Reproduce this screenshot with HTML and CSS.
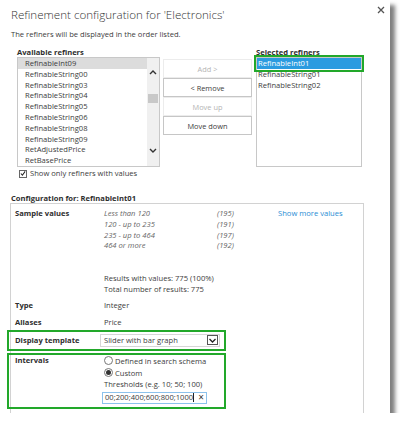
FILE: index.html
```html
<!DOCTYPE html>
<html>
<head>
<meta charset="utf-8">
<link rel="stylesheet" href="styles.css">
</head>
<body>
<div class="dialog">
  <button class="close" aria-label="Close"><svg width="8" height="8" viewBox="0 0 8 8"><path d="M1 1L7 7M7 1L1 7" stroke="#555" stroke-width="1.3" fill="none"/></svg></button>
  <h1 class="title">Refinement configuration for 'Electronics'</h1>
  <p class="intro">The refiners will be displayed in the order listed.</p>

  <div class="refiners">
    <div class="col avail">
      <div class="label">Available refiners</div>
      <div class="listbox">
        <ul class="items">
          <li class="sel-grey">RefinableInt09</li>
          <li>RefinableString00</li>
          <li>RefinableString03</li>
          <li>RefinableString04</li>
          <li>RefinableString05</li>
          <li>RefinableString06</li>
          <li>RefinableString08</li>
          <li>RefinableString09</li>
          <li>RetAdjustedPrice</li>
          <li>RetBasePrice</li>
        </ul>
        <div class="scrollbar">
          <svg class="up" width="8" height="6" viewBox="0 0 8 6"><path d="M1 5L4 2L7 5" stroke="#333" stroke-width="1.4" fill="none"/></svg>
          <div class="thumb"></div>
          <svg class="down" width="8" height="6" viewBox="0 0 8 6"><path d="M1 1L4 4L7 1" stroke="#333" stroke-width="1.4" fill="none"/></svg>
        </div>
      </div>
      <label class="check"><span class="box"><svg width="7" height="7" viewBox="0 0 7 7"><path d="M1 3.5L2.8 5.5L6 1" stroke="#222" stroke-width="1.2" fill="none"/></svg></span>Show only refiners with values</label>
    </div>
    <div class="buttons">
      <button class="btn disabled">Add &gt;</button>
      <button class="btn">&lt; Remove</button>
      <button class="btn disabled">Move up</button>
      <button class="btn">Move down</button>
    </div>
    <div class="col selected">
      <div class="label">Selected refiners</div>
      <div class="listbox">
        <ul class="items">
          <li class="sel-blue">RefinableInt01</li>
          <li>RefinableString01</li>
          <li>RefinableString02</li>
        </ul>
      </div>
    </div>
  </div>

  <div class="config-title">Configuration for: RefinableInt01</div>
  <div class="config">
    <div class="row sample">
      <div class="key">Sample values</div>
      <div class="val">
        <div class="samples">
          <div class="values">
            <div>Less than 120</div>
            <div>120 - up to 235</div>
            <div>235 - up to 464</div>
            <div>464 or more</div>
          </div>
          <div class="counts">
            <div>(195)</div>
            <div>(191)</div>
            <div>(197)</div>
            <div>(192)</div>
          </div>
          <a class="more">Show more values</a>
        </div>
        <div class="results">
          <div>Results with values: 775 (100%)</div>
          <div>Total number of results: 775</div>
        </div>
      </div>
    </div>
    <div class="row gap">
      <div class="key">Type</div>
      <div class="val">Integer</div>
    </div>
    <div class="row gap">
      <div class="key">Aliases</div>
      <div class="val">Price</div>
    </div>
    <div class="row hl template">
      <div class="key">Display template</div>
      <div class="val">
        <div class="select">Slider with bar graph<span class="arrow"><svg width="9" height="7" viewBox="0 0 9 7"><path d="M1.5 2L4.5 5L7.5 2" stroke="#222" stroke-width="1.3" fill="none"/></svg></span></div>
      </div>
    </div>
    <div class="row hl intervals">
      <div class="key">Intervals</div>
      <div class="val">
        <div class="radio"><span class="circle"></span>Defined in search schema</div>
        <div class="radio"><span class="circle on"></span>Custom</div>
        <div class="thr">Thresholds (e.g. 10; 50; 100)</div>
        <div class="input"><span class="txt">00;200;400;600;800;1000</span><span class="caret"></span><span class="clear">×</span></div>
      </div>
    </div>
  </div>
</div>
</body>
</html>
```

FILE: styles.css
```css
* { box-sizing: border-box; margin: 0; padding: 0; }
body {
  margin: 0;
  background: #fff;
  font-family: "Open Sans", "Noto Sans", sans-serif;
  font-size: 7.6px;
  line-height: 11px;
  color: #3c3c3c;
}
.dialog {
  position: relative;
  width: 390px;
  height: 413px;
  background: #fff;
  overflow: hidden;
  box-shadow: 5px 5px 4px rgba(0,0,0,0.5);
  padding: 6px 0 0 11px;
}
.close {
  position: absolute;
  top: 5px;
  right: 4px;
  width: 10px;
  height: 10px;
  border: 0;
  background: none;
  display: flex;
  align-items: center;
  justify-content: center;
}
.title {
  font-size: 11.6px;
  font-weight: 300;
  line-height: 18px;
  color: #333;
}
.intro {
  margin-top: 5px;
  line-height: 11px;
}
.refiners {
  display: flex;
  margin-top: 8px;
  margin-left: 6px;
}
.label {
  font-weight: 700;
  line-height: 9px;
  color: #2e2e2e;
}
.avail { width: 143px; }
.listbox {
  display: flex;
  height: 110px;
  border: 1px solid #c8c8c8;
  overflow: hidden;
}
.items {
  list-style: none;
  flex: 1;
  overflow: hidden;
}
.items li {
  line-height: 10.8px;
  height: 10.8px;
  white-space: nowrap;
}
.avail .items li { padding-left: 7px; }
.sel-grey { background: #dcdcdc; }
.scrollbar {
  width: 12px;
  background: #f0f0f0;
  display: flex;
  flex-direction: column;
  align-items: center;
}
.scrollbar .up { margin-top: 11px; }
.scrollbar .thumb {
  margin-top: 19px;
  width: 10px;
  height: 9px;
  background: #c8c8c8;
}
.scrollbar .down { margin-top: auto; margin-bottom: 12px; }
.check {
  display: flex;
  align-items: center;
  margin-top: 1px;
  line-height: 11px;
}
.check .box {
  width: 8px;
  height: 8px;
  margin: 0 3px 0 2px;
  border: 1px solid #666;
  display: flex;
  align-items: center;
  justify-content: center;
}
.buttons {
  width: 89px;
  margin-left: 3px;
  padding-top: 11px;
  display: flex;
  flex-direction: column;
}
.btn {
  height: 19px;
  font-family: inherit;
  font-size: 7.4px;
  color: #3c3c3c;
  background: #fff;
  border: 1px solid #c6c6c6;
}
.btn.disabled {
  color: #b4b4b4;
  border-color: #ececec;
}
.selected { width: 106px; margin-left: 4px; }
.selected .listbox, .selected .items { overflow: visible; }
.selected .items li { padding-left: 1px; }
.sel-blue {
  background: #2b9be0;
  color: #fff;
  outline: 2px solid #22a82a;
  outline-offset: 1px;
}
.config-title {
  margin-top: 14px;
  font-weight: 700;
  line-height: 10px;
  color: #2e2e2e;
}
.config {
  margin-left: -1px;
  width: 354px;
  height: 240px;
  border: 1px solid #d2d2d2;
  padding: 4px 0 0 4px;
  line-height: 10.8px;
}
.row {
  display: grid;
  grid-template-columns: 89px 1fr;
}
.key { font-weight: 700; color: #2e2e2e; }
.gap { margin-top: 6px; }
.samples {
  display: grid;
  grid-template-columns: 113px 61px auto;
  font-style: italic;
  color: #666;
  height: 64.8px;
}
.more {
  font-style: normal;
  color: #2a8dd4;
}
.hl {
  margin-left: -8px;
  width: 219px;
  border: 2px solid #22a82a;
  padding-left: 6px;
}
.template {
  margin-top: 2px;
  padding-top: 2px;
  padding-bottom: 2px;
  align-items: center;
}
.select {
  margin-left: -4px;
  width: 120px;
  height: 13px;
  border: 1px solid #d6d6d6;
  padding-left: 3px;
  display: flex;
  align-items: center;
  justify-content: space-between;
}
.select .arrow {
  width: 11px;
  height: 10px;
  margin-right: 1px;
  border: 1px solid #555;
  display: flex;
  align-items: center;
  justify-content: center;
}
.intervals {
  margin-top: 2px;
  padding-bottom: 3px;
}
.intervals .key { line-height: 11px; }
.radio {
  height: 12px;
  display: flex;
  align-items: center;
}
.circle {
  width: 9px;
  height: 9px;
  border: 1px solid #777;
  border-radius: 50%;
  margin-right: 2px;
  display: flex;
  align-items: center;
  justify-content: center;
}
.circle.on::after {
  content: "";
  width: 5px;
  height: 5px;
  border-radius: 50%;
  background: #333;
}
.thr { line-height: 10.8px; }
.input {
  margin-top: 2px;
  margin-left: -2px;
  width: 105px;
  height: 12px;
  border: 1px solid #8cc2ec;
  display: flex;
  align-items: center;
  padding-left: 2px;
}
.input .caret {
  width: 1px;
  height: 9px;
  background: #222;
}
.input .clear {
  margin-left: 4px;
  font-size: 10px;
  color: #333;
}
```
